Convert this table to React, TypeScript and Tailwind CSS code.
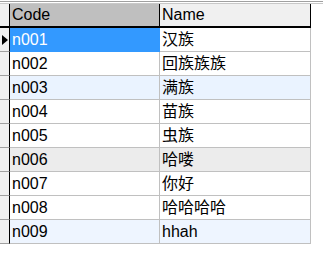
const rows = [
  { code: "n001", name: "汉族", bg: "bg-white" },
  { code: "n002", name: "回族族族", bg: "bg-white" },
  { code: "n003", name: "满族", bg: "bg-[#eaf3ff]" },
  { code: "n004", name: "苗族", bg: "bg-white" },
  { code: "n005", name: "虫族", bg: "bg-white" },
  { code: "n006", name: "哈喽", bg: "bg-[#ececec]" },
  { code: "n007", name: "你好", bg: "bg-white" },
  { code: "n008", name: "哈哈哈哈", bg: "bg-white" },
  { code: "n009", name: "hhah", bg: "bg-[#eef5ff]" },
];

export default function App() {
  return (
    <div
      className="w-[323px] h-[257px] bg-white overflow-hidden text-[16px] text-black"
      style={{ fontFamily: '"Liberation Sans", "Noto Sans CJK SC", sans-serif' }}
    >
      {/* grid frame top edge */}
      <div className="h-[1px]" />
      <div className="h-[1px] bg-[#a0a0a0]" />
      <div className="h-[1px]" />
      <div className="h-[1px] bg-[#c8c8c8]" />

      <div className="w-[311px]">
        {/* column headers */}
        <div className="grid grid-cols-[10px_150px_151px] h-[24px] border-b-2 border-black">
          <div className="bg-[#f0f0f0] border-r border-black" />
          <div className="bg-[#bfbfbf] border-r border-black flex items-center pl-[2px] leading-none">
            Code
          </div>
          <div className="bg-[#f0f0f0] border-r border-black flex items-center pl-[2px] leading-none">
            Name
          </div>
        </div>

        {rows.map((r, i) => {
          const selected = i === 0;
          return (
            <div
              key={r.code}
              className="grid grid-cols-[10px_150px_151px] h-[24px]"
            >
              <div className="bg-[#f0f0f0] border-r border-black border-b border-b-[#a0a0a0] flex items-center">
                {selected && (
                  <svg width="8" height="12" viewBox="0 0 8 12" className="ml-[1px]">
                    <path d="M1 1 L7 6 L1 11 Z" fill="#000" />
                  </svg>
                )}
              </div>
              <div
                className={`flex items-center pl-[2px] leading-none ${
                  selected
                    ? "bg-[#3399ff] text-white"
                    : `${r.bg} border-r border-r-[#c0c0c0] border-b border-b-[#c0c0c0]`
                }`}
              >
                {r.code}
              </div>
              <div
                className={`flex items-center pl-[2px] leading-none border-r border-b border-[#c0c0c0] ${
                  selected ? "bg-white" : r.bg
                }`}
              >
                {r.name}
              </div>
            </div>
          );
        })}
      </div>
    </div>
  );
}
